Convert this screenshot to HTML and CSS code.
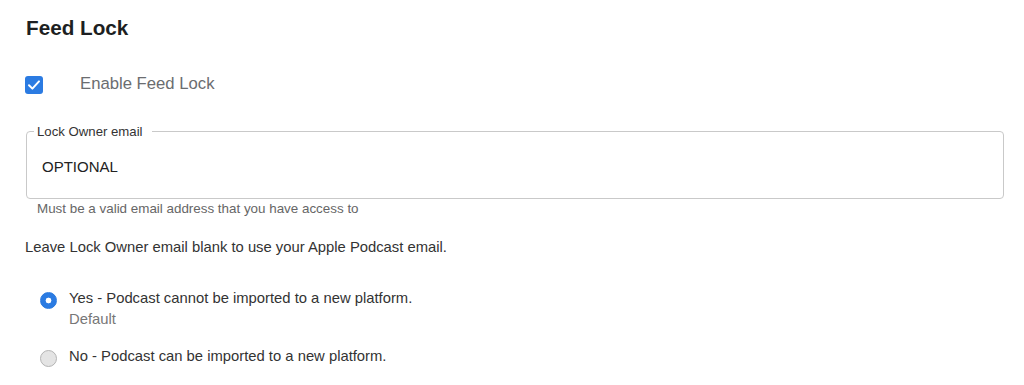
FILE: index.html
```html
<!DOCTYPE html>
<html lang="en">
<head>
  <meta charset="UTF-8" />
  <title>Feed Lock</title>
  <link rel="stylesheet" href="styles.css">
</head>
<body>

<div class="feed-lock">
  <h2 class="title">Feed Lock</h2>

  <label class="check-row">
    <span class="checkbox">
      <svg width="18" height="18" viewBox="0 0 18 18"><path d="M4 9.3 L7.4 12.6 L14 5.4" fill="none" stroke="#fff" stroke-width="2" stroke-linecap="round" stroke-linejoin="round"/></svg>
    </span>
    <span class="check-label">Enable Feed Lock</span>
  </label>

  <fieldset class="field">
    <legend>Lock Owner email</legend>
    <div class="field-value">OPTIONAL</div>
  </fieldset>
  <p class="helper">Must be a valid email address that you have access to</p>

  <p class="note">Leave Lock Owner email blank to use your Apple Podcast email.</p>

  <div class="radios">
    <div class="radio-option">
      <span class="radio checked"></span>
      <div>
        <div class="radio-label">Yes - Podcast cannot be imported to a new platform.</div>
        <div class="radio-sub">Default</div>
      </div>
    </div>
    <div class="radio-option">
      <span class="radio"></span>
      <div>
        <div class="radio-label">No - Podcast can be imported to a new platform.</div>
      </div>
    </div>
  </div>
</div>

</body>
</html>
```

FILE: styles.css
```css
* {
  margin: 0;
  padding: 0;
  box-sizing: border-box;
  font-family: "Liberation Sans", Arial, sans-serif;
}

body {
  background: #fff;
  width: 1024px;
  height: 385px;
  overflow: hidden;
}

.feed-lock {
  padding: 16px 0 0 25px;
}

.title {
  font-size: 20.7px;
  line-height: 24px;
  font-weight: 700;
  color: #1d1f22;
  padding-left: 1px;
}

.check-row {
  display: flex;
  align-items: center;
  margin-top: 36px;
  height: 18px;
}

.checkbox {
  width: 18px;
  height: 18px;
  border-radius: 3px;
  background: #2b7be2;
  display: flex;
}

.check-label {
  margin-left: 37px;
  font-size: 16.7px;
  color: #6b6d70;
  line-height: 18px;
  margin-top: -2px;
}

.field {
  margin: 30px 0 0 1px;
  width: 978px;
  border: 1px solid #c9c9c9;
  border-radius: 4px;
  padding: 19px 15px 23px 15px;
}

.field legend {
  font-size: 13.2px;
  line-height: 15px;
  color: #333;
  padding: 0 9px 0 3px;
  margin-left: -8px;
}

.field-value {
  font-size: 15px;
  line-height: 17px;
  color: #222;
}

.helper {
  margin-top: 2px;
  padding-left: 12px;
  font-size: 13.4px;
  line-height: 15px;
  color: #666;
}

.note {
  margin-top: 23px;
  font-size: 14.8px;
  line-height: 17px;
  color: #333;
}

.radios {
  margin-top: 34px;
  padding-left: 15px;
}

.radio-option {
  display: flex;
  align-items: flex-start;
  margin-bottom: 20px;
}

.radio {
  width: 17px;
  height: 17px;
  border-radius: 50%;
  border: 1px solid #b4b4b4;
  background: #e4e4e4;
  margin: 2px 12px 0 0;
  flex-shrink: 0;
}

.radio.checked {
  border-color: #2878de;
  background: radial-gradient(circle, #fff 0 2.6px, #2b7be2 3.2px);
}

.radio-label {
  font-size: 14.8px;
  line-height: 17px;
  color: #333;
}

.radio-sub {
  margin-top: 4px;
  font-size: 14.8px;
  line-height: 17px;
  color: #777;
}
```
